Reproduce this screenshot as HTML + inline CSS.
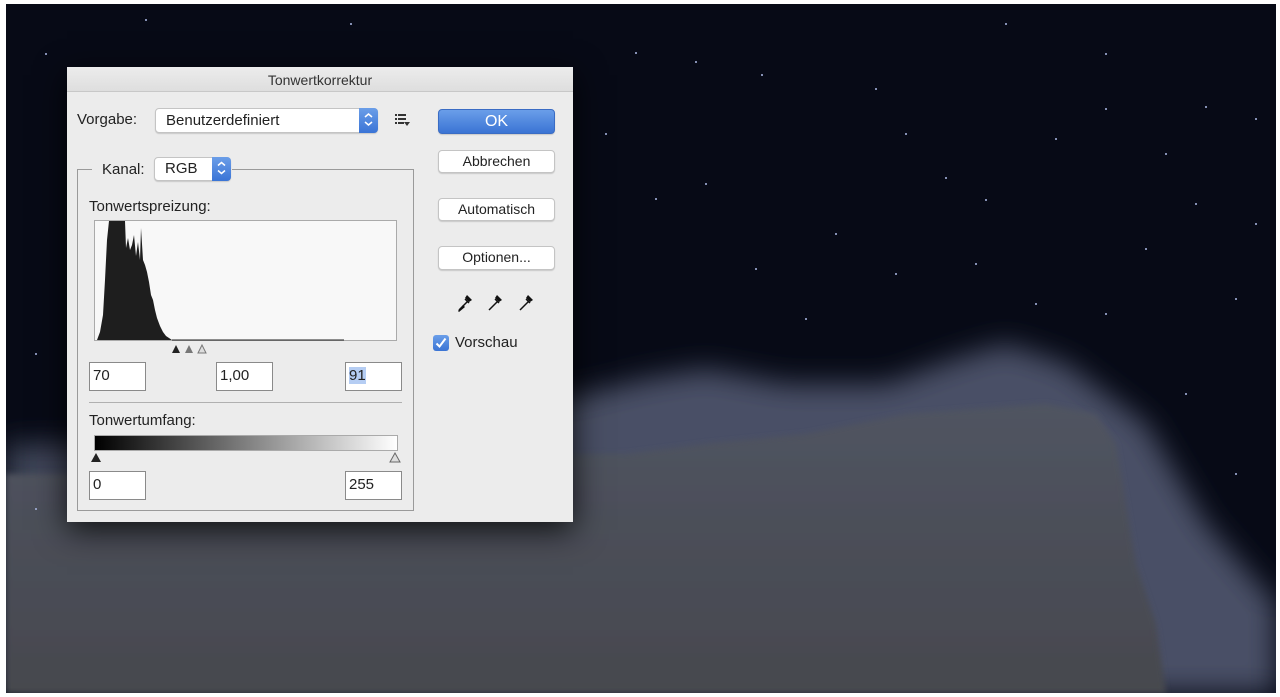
<!DOCTYPE html>
<html><head><meta charset="utf-8"><style>
*{margin:0;padding:0;box-sizing:border-box}
body{width:1280px;height:697px;background:#fff;position:relative;overflow:hidden;font-family:"Liberation Sans",sans-serif;font-size:14px;color:#222}
.a{position:absolute}
.dlg{left:67px;top:67px;width:506px;height:455px;background:#ececec;box-shadow:0 8px 30px rgba(0,0,0,.8)}
.title{left:0;top:0;width:506px;height:25px;background:linear-gradient(#ececec,#dedede);border-bottom:1px solid #c8c8c8;text-align:center;line-height:26px;font-size:14px;color:#333}
.btn{background:#fff;border:1px solid #c4c4c4;border-radius:4px;text-align:center;font-size:14px;line-height:21px;box-shadow:0 1px 1px rgba(0,0,0,.15)}
.inp{background:#fff;border:1px solid #8a8a8a;font-size:15px;line-height:26px;padding-left:3px}
.sel{background:#fff;border:1px solid #c4c4c4;border-radius:4px;box-shadow:0 1px 1px rgba(0,0,0,.15);font-size:15px}
.step{position:absolute;right:-1px;top:-1px;bottom:-1px;width:19px;background:linear-gradient(#6b9ee8,#3a74d6);border-radius:0 4px 4px 0}
</style></head><body>
<svg class="a" style="left:6px;top:4px" width="1270" height="689" viewBox="0 0 1270 689">
<defs><filter id="b"><feGaussianBlur stdDeviation="14"/></filter><filter id="b2"><feGaussianBlur stdDeviation="3"/></filter>
<linearGradient id="rk" x1="0" y1="0" x2="0" y2="1"><stop offset="0" stop-color="#505461"/><stop offset="1" stop-color="#46484e"/></linearGradient>
<linearGradient id="hz" x1="0" y1="0" x2="1" y2="0"><stop offset="0" stop-color="#3e4457"/><stop offset=".5" stop-color="#4a5066"/><stop offset="1" stop-color="#4a4f66"/></linearGradient></defs>
<rect width="1270" height="689" fill="#070a16"/>
<path d="M0 440 L0 689 L1270 689 L1270 600 L1200 520 L1140 420 L1060 360 L1000 340 L950 355 L880 380 L780 380 L700 365 L640 375 L580 390 L400 420 L200 440 Z" fill="url(#hz)" filter="url(#b)"/>
<path d="M0 470 L0 689 L1160 689 L1150 620 L1130 560 L1110 440 L1090 410 L1040 400 L900 410 L800 430 L700 440 L620 450 L500 450 L300 460 L100 470 Z" fill="url(#rk)" filter="url(#b2)"/>
<g fill="#aebbe8">
<circle cx="140" cy="16" r="1"/><circle cx="345" cy="20" r="1"/><circle cx="630" cy="49" r="1"/><circle cx="690" cy="58" r="1"/><circle cx="756" cy="71" r="1"/><circle cx="870" cy="85" r="1"/><circle cx="1100" cy="50" r="1"/><circle cx="1100" cy="105" r="1"/><circle cx="1200" cy="103" r="1"/><circle cx="1250" cy="115" r="1"/><circle cx="900" cy="130" r="1"/><circle cx="940" cy="174" r="1"/><circle cx="980" cy="196" r="1"/><circle cx="1140" cy="245" r="1"/><circle cx="1190" cy="200" r="1"/><circle cx="700" cy="180" r="1"/><circle cx="650" cy="195" r="1"/><circle cx="830" cy="230" r="1"/><circle cx="890" cy="270" r="1"/><circle cx="970" cy="260" r="1"/><circle cx="1030" cy="300" r="1"/><circle cx="1100" cy="310" r="1"/><circle cx="1230" cy="295" r="1"/><circle cx="1250" cy="220" r="1"/><circle cx="750" cy="265" r="1"/><circle cx="800" cy="315" r="1"/><circle cx="1160" cy="150" r="1"/><circle cx="30" cy="350" r="1"/><circle cx="40" cy="50" r="1"/><circle cx="600" cy="130" r="1"/><circle cx="1000" cy="20" r="1"/><circle cx="1050" cy="135" r="1"/><circle cx="1180" cy="390" r="1"/><circle cx="1230" cy="470" r="1"/><circle cx="30" cy="505" r="1"/></g>
</svg>
<div class="a dlg">
<div class="a title">Tonwertkorrektur</div>
<div class="a" style="left:10px;top:44px;font-size:15px">Vorgabe:</div>
<div class="a sel" style="left:88px;top:41px;width:223px;height:25px;line-height:23px;padding-left:10px">Benutzerdefiniert<div class="step"><svg width="19" height="23"><path d="M6 9l3.5-3 3.5 3M6 14l3.5 3 3.5-3" stroke="#fff" stroke-width="1.5" fill="none"/></svg></div></div>
<svg class="a" style="left:328px;top:46px" width="16" height="14"><g fill="#333"><rect x="0" y="1" width="2" height="2"/><rect x="3" y="1" width="8" height="2"/><rect x="0" y="5" width="2" height="2"/><rect x="3" y="5" width="8" height="2"/><rect x="0" y="9" width="2" height="2"/><rect x="3" y="9" width="6" height="2"/><path d="M9 9h6l-3 4z"/></g></svg>
<div class="a btn" style="left:371px;top:42px;width:117px;height:25px;background:linear-gradient(#6a9ee9,#3b74d4);border-color:#3a6cc4;color:#fff;font-size:16px;line-height:24px">OK</div>
<div class="a btn" style="left:371px;top:83px;width:117px;height:23px">Abbrechen</div>
<div class="a btn" style="left:371px;top:131px;width:117px;height:23px">Automatisch</div>
<div class="a btn" style="left:371px;top:179px;width:117px;height:24px">Optionen...</div>
<svg class="a" style="left:388px;top:224px" width="90" height="22"><g stroke="#111" stroke-width="1.5" fill="none"><path d="M4 19l8-8M10 8l4 4"/><path d="M34 19l8-8M40 8l4 4"/><path d="M65 19l8-8M71 8l4 4"/></g><g fill="#111"><path d="M12 4l5 5-3 2-4-4z"/><path d="M42 4l5 5-3 2-4-4z"/><path d="M73 4l5 5-3 2-4-4z"/><path d="M3 20l5-6 2 2-6 5z"/></g></svg>
<div class="a" style="left:366px;top:268px;width:16px;height:16px;border-radius:3px;background:linear-gradient(#6a9ee9,#3b74d4)"><svg width="16" height="16"><path d="M3.5 8.5l3 3 6-8" stroke="#fff" stroke-width="2" fill="none"/></svg></div>
<div class="a" style="left:388px;top:267px;font-size:15px">Vorschau</div>
<div class="a" style="left:10px;top:102px;width:337px;height:342px;border:1px solid #9a9a9a"></div>
<div class="a" style="left:25px;top:90px;width:140px;height:26px;background:#ececec"></div>
<div class="a" style="left:35px;top:94px;font-size:15px">Kanal:</div>
<div class="a sel" style="left:87px;top:90px;width:77px;height:24px;line-height:22px;padding-left:10px">RGB<div class="step"><svg width="19" height="22"><path d="M6 8.5l3.5-3 3.5 3M6 13.5l3.5 3 3.5-3" stroke="#fff" stroke-width="1.5" fill="none"/></svg></div></div>
<div class="a" style="left:22px;top:131px;font-size:15px">Tonwertspreizung:</div>
<svg class="a" style="left:27px;top:153px" width="304" height="122"><rect x=".5" y=".5" width="302" height="120" fill="#f8f8f8" stroke="#aaa"/>
<path d="M3 120 L6 112 L9 95 L11 60 L13 20 L15 1 L31 1 L32 28 L34 18 L36 30 L38 25 L40 15 L42 36 L44 22 L46 40 L47 8 L49 40 L51 45 L53 52 L55 62 L57 75 L59 80 L61 90 L63 98 L66 106 L69 112 L72 116 L78 120 Z" fill="#1e1e1e"/><path d="M78 120 H250" stroke="#222"/></svg>
<svg class="a" style="left:103px;top:275px" width="40" height="12"><path d="M2 11l4-8 4 8z" fill="#222"/><path d="M15 11l4-8 4 8z" fill="#777"/><path d="M28 11l4-8 4 8z" fill="#ddd" stroke="#777"/></svg>
<div class="a inp" style="left:22px;top:295px;width:57px;height:29px">70</div>
<div class="a inp" style="left:149px;top:295px;width:57px;height:29px">1,00</div>
<div class="a inp" style="left:278px;top:295px;width:57px;height:29px"><span style="background:#b5cdf3">91</span></div>
<div class="a" style="left:22px;top:335px;width:313px;height:1px;background:#b0b0b0"></div>
<div class="a" style="left:22px;top:345px;font-size:15px">Tonwertumfang:</div>
<div class="a" style="left:27px;top:368px;width:304px;height:16px;background:linear-gradient(90deg,#000,#fff);border:1px solid #aaa"></div>
<svg class="a" style="left:22px;top:383px" width="316" height="14"><path d="M2 12l5-9 5 9z" fill="#222"/><path d="M301 12l5-9 5 9z" fill="#ddd" stroke="#666"/></svg>
<div class="a inp" style="left:22px;top:404px;width:57px;height:29px">0</div>
<div class="a inp" style="left:278px;top:404px;width:57px;height:29px">255</div>
</div>
</body></html>
